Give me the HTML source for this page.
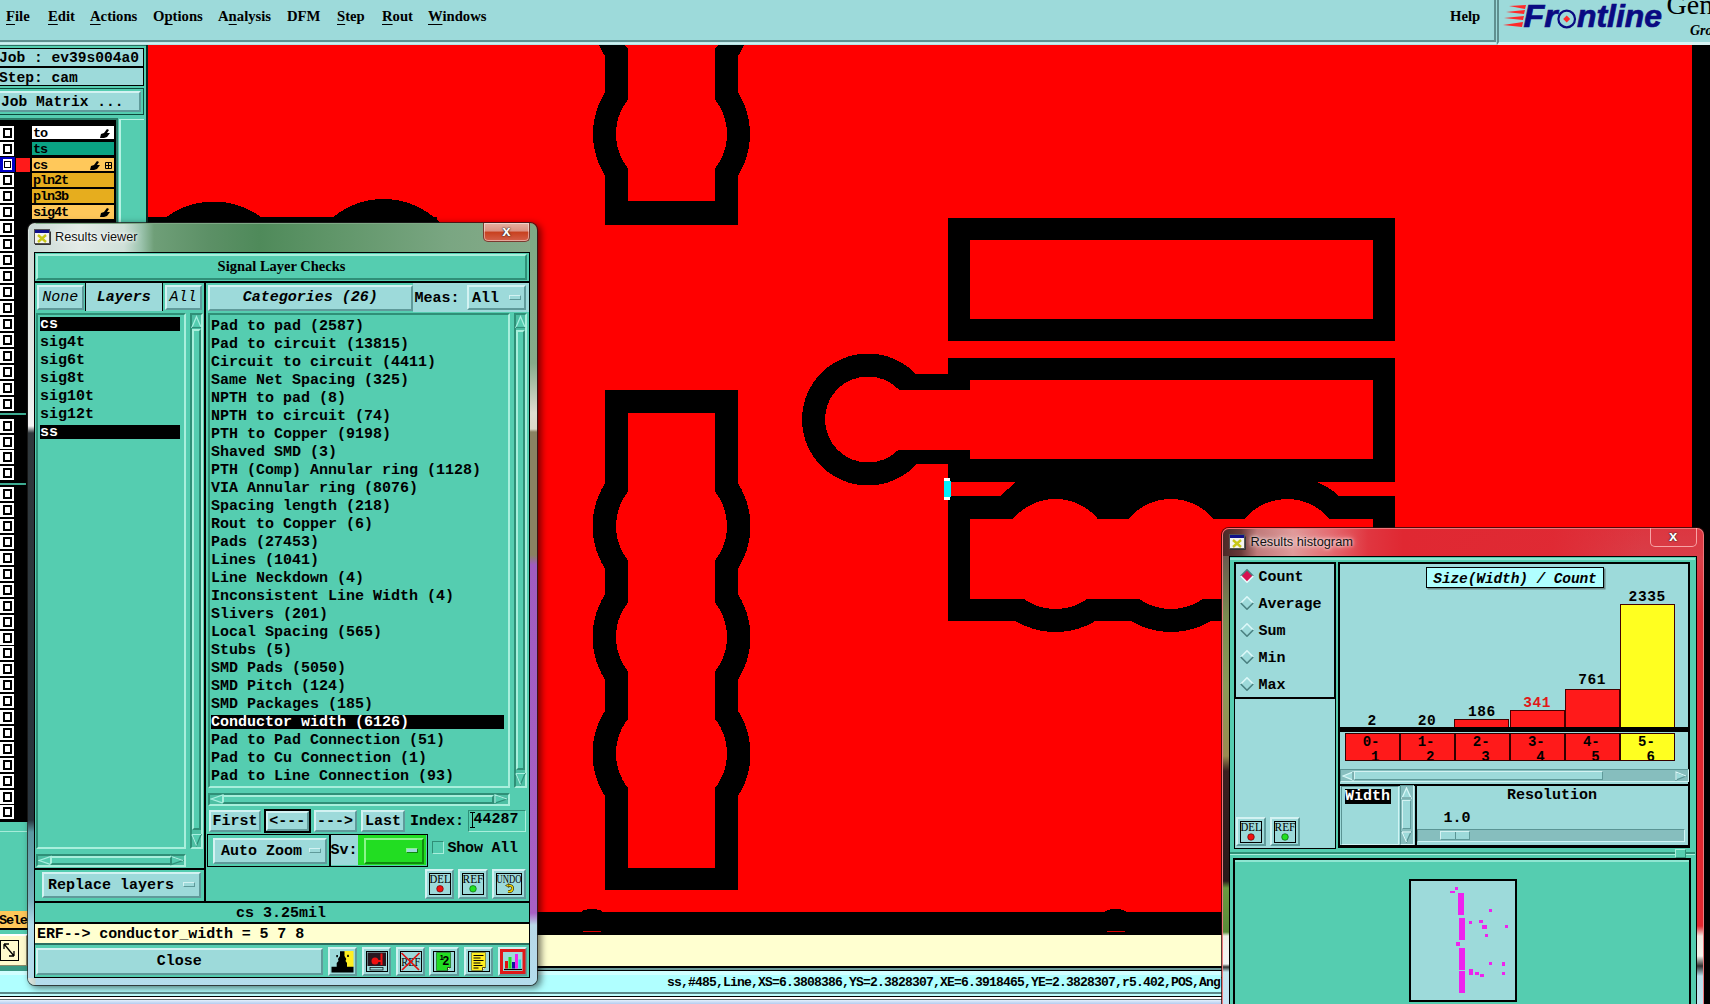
<!DOCTYPE html>
<html><head><meta charset="utf-8"><title>Genesis</title>
<style>
*{box-sizing:border-box;margin:0;padding:0}
html,body{width:1710px;height:1004px;overflow:hidden;background:#9ddada}
body{position:relative;font-family:"Liberation Mono",monospace;font-weight:bold;font-size:15px;color:#000}
.a{position:absolute}
.mono{font-family:"Liberation Mono",monospace;font-weight:bold}
.serif{font-family:"Liberation Serif",serif;font-weight:bold}
.sans{font-family:"Liberation Sans",sans-serif;font-weight:normal}
.teal{background:#55cdb0}
.cy{background:#9ddada}
.raised{border:2px solid;border-color:#d3f2f2 #5f9a9a #5f9a9a #d3f2f2}
.raisedT{border:2px solid;border-color:#a9efdc #2f8f77 #2f8f77 #a9efdc}
.sunkT{border:2px solid;border-color:#2f8f77 #a9efdc #a9efdc #2f8f77}
.t{white-space:pre;line-height:18px}
u{text-decoration:underline;text-underline-offset:3px;text-decoration-thickness:1px}
</style></head><body>
<div class="a cy" style="left:0;top:0;width:1496px;height:42px;border-right:2px solid #5f8f8f;border-bottom:2px solid #5f8f8f"></div>
<div class="a cy" style="left:1497px;top:0;width:213px;height:45px;border-left:2px solid #5f8f8f;border-bottom:3px solid #d9f4f4"></div>
<div class="a" style="left:0;top:42px;width:1496px;height:3px;background:linear-gradient(#b8e6e6,#d4f2f2 60%,#9ddada)"></div>
<div class="a serif" style="left:0;top:7px;font-size:14.7px;line-height:18px;white-space:pre">
<span class="a" style="top:0;left:6px"><u>F</u>ile</span>
<span class="a" style="top:0;left:48px"><u>E</u>dit</span>
<span class="a" style="top:0;left:90px"><u>A</u>ctions</span>
<span class="a" style="top:0;left:153px">O<u>p</u>tions</span>
<span class="a" style="top:0;left:218px">A<u>n</u>alysis</span>
<span class="a" style="top:0;left:287px">DFM</span>
<span class="a" style="top:0;left:337px"><u>S</u>tep</span>
<span class="a" style="top:0;left:382px"><u>R</u>out</span>
<span class="a" style="top:0;left:428px"><u>W</u>indows</span>
<span class="a" style="top:0;left:1450px">Help</span>
</div>
<svg class="a" style="left:1497px;top:0" width="213" height="45" viewBox="1497 0 213 45">
<g fill="#ff2a2a"><polygon points="1509,6 1526,5 1525,9"/><polygon points="1506,12 1525,10 1524,14"/><polygon points="1504,18 1524,16 1523,20"/><polygon points="1503,25 1523,22 1522,27"/></g>
<text x="1523.5" y="27" font-family="Liberation Sans, sans-serif" font-weight="bold" font-style="italic" font-size="30.5" fill="#0a0a82" stroke="#0a0a82" stroke-width="0.7" textLength="34" lengthAdjust="spacingAndGlyphs">Fr</text>
<circle cx="1566.7" cy="19" r="8.3" fill="none" stroke="#0a0a82" stroke-width="2.2"/>
<polygon points="1566.7,15.5 1570.2,19 1566.7,22.5 1563.2,19" fill="#ff2a2a"/>
<text x="1577" y="27" font-family="Liberation Sans, sans-serif" font-weight="bold" font-style="italic" font-size="30.5" fill="#0a0a82" stroke="#0a0a82" stroke-width="0.7" textLength="85" lengthAdjust="spacingAndGlyphs">ntline</text>
<text x="1666.5" y="13.5" font-family="Liberation Serif, serif" font-weight="normal" font-size="28" fill="#000">Genesis</text>
<text x="1690" y="35" font-family="Liberation Serif, serif" font-weight="bold" font-style="italic" font-size="14" fill="#000">Group</text>
</svg>

<svg class="a" style="left:0;top:0" width="1710" height="1004" viewBox="0 0 1710 1004" shape-rendering="crispEdges">
<rect x="146" y="45" width="1564" height="890" fill="#ff0000"/>
<rect x="146" y="45" width="2" height="890" fill="#000"/>
<!-- A -->
<clipPath id="ca"><rect x="500" y="45" width="400" height="300"/></clipPath><g clip-path="url(#ca)"><g fill="#000"><rect x="604.5" y="45" width="133.5" height="179.5"/><circle cx="671.5" cy="134" r="78.5"/><circle cx="671.5" cy="14.5" r="78.5"/></g>
<g fill="#ff0000"><rect x="628" y="45" width="87" height="156"/><circle cx="671.5" cy="134" r="55.5"/><circle cx="671.5" cy="14.5" r="55.5"/></g></g>
<!-- B -->
<g fill="#000"><rect x="605" y="390" width="133" height="500"/><circle cx="671.5" cy="526" r="79"/><circle cx="671.5" cy="637" r="79"/><circle cx="671.5" cy="753.5" r="79"/></g>
<g fill="#ff0000"><rect x="628" y="412.5" width="87" height="455"/><circle cx="671.5" cy="526" r="55.5"/><circle cx="671.5" cy="637" r="55.5"/><circle cx="671.5" cy="753.5" r="55.5"/></g>
<!-- C -->
<rect x="947.5" y="217.5" width="447.5" height="123.5" fill="#000"/>
<rect x="969.5" y="239.5" width="403" height="79.5" fill="#ff0000"/>
<!-- D -->
<g fill="#000"><rect x="947.5" y="358" width="447.5" height="123.8"/><circle cx="868" cy="419.5" r="66"/><rect x="868" y="374" width="101" height="89.5"/></g>
<!-- E outer -->
<g fill="#000"><rect x="947.5" y="496.4" width="447.5" height="124.6"/><circle cx="1055.5" cy="554" r="78"/><circle cx="1171" cy="554" r="78"/><circle cx="1287" cy="554" r="78"/><polygon points="1017,481 1315,481 1333,497 999,497"/></g>
<g fill="#ff0000"><rect x="969.5" y="380" width="403" height="79"/><circle cx="868" cy="419.5" r="43"/><rect x="868" y="389.5" width="102" height="60.5"/></g>
<g fill="#ff0000"><rect x="969.5" y="519" width="403" height="79.5"/><circle cx="1055.5" cy="554" r="55"/><circle cx="1171" cy="554" r="55"/><circle cx="1287" cy="554" r="55"/></g>
<!-- left band + bumps -->
<clipPath id="cb"><rect x="147" y="45" width="400" height="182"/></clipPath><g fill="#000" clip-path="url(#cb)"><rect x="147" y="217" width="290" height="10"/><circle cx="213.6" cy="281" r="79.5"/><circle cx="383.5" cy="278" r="79"/></g>
<!-- bottom band -->
<rect x="147" y="912" width="1563" height="23" fill="#000"/>
<ellipse cx="592" cy="914" rx="12" ry="5" fill="#000"/><ellipse cx="1115.5" cy="914" rx="12" ry="5" fill="#000"/>
<rect x="583" y="931" width="18" height="1" fill="#d00"/><rect x="1107" y="931" width="18" height="1" fill="#d00"/>
<!-- right strip -->
<rect x="1692" y="45" width="18" height="890" fill="#000"/>
<!-- cyan marker -->
<rect x="943.5" y="477.5" width="7" height="23" rx="3.5" fill="#fff"/><rect x="943.5" y="481" width="7" height="16" fill="#00f0ff"/>
</svg>

<div class="a teal" style="left:0;top:45px;width:147px;height:930px;border-top:1px solid #2a6f60"></div>
<div class="a" style="left:146px;top:45px;width:1.5px;height:890px;background:#0a2a22"></div>
<div class="a cy mono" style="left:-2px;top:48px;width:146px;height:20px;border:2px solid #000;border-top-width:1px;border-right-width:1px;font-size:14.6px;line-height:19px;white-space:pre;text-indent:-1px">Job : ev39s004a0</div>
<div class="a cy mono" style="left:-2px;top:66px;width:146px;height:20px;border:2px solid #000;border-bottom-width:1px;border-right-width:1px;font-size:14.6px;line-height:20px;white-space:pre;text-indent:-1px">Step: cam</div>
<div class="a teal" style="left:-2px;top:88px;width:146px;height:27px;border:1px solid #0d4a3c"></div>
<div class="a cy raised mono" style="left:-2px;top:91px;width:143px;height:21px;font-size:14.6px;line-height:18px;white-space:pre;padding-left:1px">Job Matrix ...</div>
<div class="a" style="left:0;top:118px;width:118px;height:704px;background:#000;border-top:2px solid #2a7a66;border-right:2px solid #2a7a66"></div>
<div class="a" style="left:119px;top:119px;width:25px;height:110px;background:#55cdb0;border-left:2px solid #b5f3e3;border-top:1px solid #b5f3e3"></div>
<div class="a" style="left:0;top:125.6px;width:14px;height:14px;background:#fff"><div class="a" style="left:2.5px;top:2px;width:9px;height:10px;border:2px solid #000"></div></div>
<div class="a mono" style="left:32px;top:125.6px;width:82px;height:13.5px;background:#ffffff;font-size:13.5px;line-height:15px;white-space:pre;padding-left:1px;letter-spacing:-1.1px;overflow:hidden">to<svg class="a" style="left:68px;top:3px" width="10" height="9" viewBox="0 0 10 9"><path d="M0 9 L1 5 L4 4 L7 0 L9 1 L7 4 L10 4 L7 8 L4 9 Z" fill="#000"/></svg></div>
<div class="a" style="left:0;top:141.5px;width:14px;height:14px;background:#fff"><div class="a" style="left:2.5px;top:2px;width:9px;height:10px;border:2px solid #000"></div></div>
<div class="a mono" style="left:32px;top:141.5px;width:82px;height:13.5px;background:#0aa384;font-size:13.5px;line-height:15px;white-space:pre;padding-left:1px;letter-spacing:-1.1px;overflow:hidden">ts</div>
<div class="a" style="left:0;top:156.5px;width:14.5px;height:15.5px;background:#0000c8"></div>
<div class="a" style="left:16px;top:157.5px;width:14px;height:14px;background:#ff1a1a"></div>
<div class="a" style="left:2.5px;top:159.0px;width:9.5px;height:10.5px;background:#fff"><div class="a" style="left:1.5px;top:1.5px;width:6.5px;height:7.5px;border:1.5px solid #000"></div></div>
<div class="a mono" style="left:32px;top:157.5px;width:82px;height:13.5px;background:#ffc85a;font-size:13.5px;line-height:15px;white-space:pre;padding-left:1px;letter-spacing:-1.1px;overflow:hidden">cs<svg class="a" style="left:58px;top:3px" width="10" height="9" viewBox="0 0 10 9"><path d="M0 9 L1 5 L4 4 L7 0 L9 1 L7 4 L10 4 L7 8 L4 9 Z" fill="#000"/></svg><svg class="a" style="left:73px;top:4px" width="7" height="7" viewBox="0 0 7 7"><path d="M0.5 0.5h6v6h-6zM3.5 0.5v6M0.5 3.5h6" fill="none" stroke="#000" stroke-width="1"/></svg></div>
<div class="a" style="left:0;top:173.4px;width:14px;height:14px;background:#fff"><div class="a" style="left:2.5px;top:2px;width:9px;height:10px;border:2px solid #000"></div></div>
<div class="a mono" style="left:32px;top:173.4px;width:82px;height:13.5px;background:#e6ad1e;font-size:13.5px;line-height:15px;white-space:pre;padding-left:1px;letter-spacing:-1.1px;overflow:hidden">pln2t</div>
<div class="a" style="left:0;top:189.4px;width:14px;height:14px;background:#fff"><div class="a" style="left:2.5px;top:2px;width:9px;height:10px;border:2px solid #000"></div></div>
<div class="a mono" style="left:32px;top:189.4px;width:82px;height:13.5px;background:#e6ad1e;font-size:13.5px;line-height:15px;white-space:pre;padding-left:1px;letter-spacing:-1.1px;overflow:hidden">pln3b</div>
<div class="a" style="left:0;top:205.3px;width:14px;height:14px;background:#fff"><div class="a" style="left:2.5px;top:2px;width:9px;height:10px;border:2px solid #000"></div></div>
<div class="a mono" style="left:32px;top:205.3px;width:82px;height:13.5px;background:#ffc85a;font-size:13.5px;line-height:15px;white-space:pre;padding-left:1px;letter-spacing:-1.1px;overflow:hidden">sig4t<svg class="a" style="left:68px;top:3px" width="10" height="9" viewBox="0 0 10 9"><path d="M0 9 L1 5 L4 4 L7 0 L9 1 L7 4 L10 4 L7 8 L4 9 Z" fill="#000"/></svg></div>
<div class="a" style="left:0;top:221.3px;width:14px;height:14px;background:#fff"><div class="a" style="left:2.5px;top:2px;width:9px;height:10px;border:2px solid #000"></div></div>
<div class="a" style="left:0;top:237.2px;width:14px;height:14px;background:#fff"><div class="a" style="left:2.5px;top:2px;width:9px;height:10px;border:2px solid #000"></div></div>
<div class="a" style="left:0;top:253.2px;width:14px;height:14px;background:#fff"><div class="a" style="left:2.5px;top:2px;width:9px;height:10px;border:2px solid #000"></div></div>
<div class="a" style="left:0;top:269.1px;width:14px;height:14px;background:#fff"><div class="a" style="left:2.5px;top:2px;width:9px;height:10px;border:2px solid #000"></div></div>
<div class="a" style="left:0;top:285.1px;width:14px;height:14px;background:#fff"><div class="a" style="left:2.5px;top:2px;width:9px;height:10px;border:2px solid #000"></div></div>
<div class="a" style="left:0;top:301.0px;width:14px;height:14px;background:#fff"><div class="a" style="left:2.5px;top:2px;width:9px;height:10px;border:2px solid #000"></div></div>
<div class="a" style="left:0;top:317.0px;width:14px;height:14px;background:#fff"><div class="a" style="left:2.5px;top:2px;width:9px;height:10px;border:2px solid #000"></div></div>
<div class="a" style="left:0;top:332.9px;width:14px;height:14px;background:#fff"><div class="a" style="left:2.5px;top:2px;width:9px;height:10px;border:2px solid #000"></div></div>
<div class="a" style="left:0;top:348.9px;width:14px;height:14px;background:#fff"><div class="a" style="left:2.5px;top:2px;width:9px;height:10px;border:2px solid #000"></div></div>
<div class="a" style="left:0;top:364.9px;width:14px;height:14px;background:#fff"><div class="a" style="left:2.5px;top:2px;width:9px;height:10px;border:2px solid #000"></div></div>
<div class="a" style="left:0;top:380.8px;width:14px;height:14px;background:#fff"><div class="a" style="left:2.5px;top:2px;width:9px;height:10px;border:2px solid #000"></div></div>
<div class="a" style="left:0;top:396.8px;width:14px;height:14px;background:#fff"><div class="a" style="left:2.5px;top:2px;width:9px;height:10px;border:2px solid #000"></div></div>
<div class="a" style="left:0;top:418.7px;width:14px;height:14px;background:#fff"><div class="a" style="left:2.5px;top:2px;width:9px;height:10px;border:2px solid #000"></div></div>
<div class="a" style="left:0;top:434.5px;width:14px;height:14px;background:#fff"><div class="a" style="left:2.5px;top:2px;width:9px;height:10px;border:2px solid #000"></div></div>
<div class="a" style="left:0;top:450.3px;width:14px;height:14px;background:#fff"><div class="a" style="left:2.5px;top:2px;width:9px;height:10px;border:2px solid #000"></div></div>
<div class="a" style="left:0;top:466.1px;width:14px;height:14px;background:#fff"><div class="a" style="left:2.5px;top:2px;width:9px;height:10px;border:2px solid #000"></div></div>
<div class="a" style="left:0;top:487.4px;width:14px;height:14px;background:#fff"><div class="a" style="left:2.5px;top:2px;width:9px;height:10px;border:2px solid #000"></div></div>
<div class="a" style="left:0;top:503.3px;width:14px;height:14px;background:#fff"><div class="a" style="left:2.5px;top:2px;width:9px;height:10px;border:2px solid #000"></div></div>
<div class="a" style="left:0;top:519.2px;width:14px;height:14px;background:#fff"><div class="a" style="left:2.5px;top:2px;width:9px;height:10px;border:2px solid #000"></div></div>
<div class="a" style="left:0;top:535.1px;width:14px;height:14px;background:#fff"><div class="a" style="left:2.5px;top:2px;width:9px;height:10px;border:2px solid #000"></div></div>
<div class="a" style="left:0;top:551.0px;width:14px;height:14px;background:#fff"><div class="a" style="left:2.5px;top:2px;width:9px;height:10px;border:2px solid #000"></div></div>
<div class="a" style="left:0;top:566.9px;width:14px;height:14px;background:#fff"><div class="a" style="left:2.5px;top:2px;width:9px;height:10px;border:2px solid #000"></div></div>
<div class="a" style="left:0;top:582.8px;width:14px;height:14px;background:#fff"><div class="a" style="left:2.5px;top:2px;width:9px;height:10px;border:2px solid #000"></div></div>
<div class="a" style="left:0;top:598.7px;width:14px;height:14px;background:#fff"><div class="a" style="left:2.5px;top:2px;width:9px;height:10px;border:2px solid #000"></div></div>
<div class="a" style="left:0;top:614.6px;width:14px;height:14px;background:#fff"><div class="a" style="left:2.5px;top:2px;width:9px;height:10px;border:2px solid #000"></div></div>
<div class="a" style="left:0;top:630.5px;width:14px;height:14px;background:#fff"><div class="a" style="left:2.5px;top:2px;width:9px;height:10px;border:2px solid #000"></div></div>
<div class="a" style="left:0;top:646.4px;width:14px;height:14px;background:#fff"><div class="a" style="left:2.5px;top:2px;width:9px;height:10px;border:2px solid #000"></div></div>
<div class="a" style="left:0;top:662.3px;width:14px;height:14px;background:#fff"><div class="a" style="left:2.5px;top:2px;width:9px;height:10px;border:2px solid #000"></div></div>
<div class="a" style="left:0;top:678.2px;width:14px;height:14px;background:#fff"><div class="a" style="left:2.5px;top:2px;width:9px;height:10px;border:2px solid #000"></div></div>
<div class="a" style="left:0;top:694.1px;width:14px;height:14px;background:#fff"><div class="a" style="left:2.5px;top:2px;width:9px;height:10px;border:2px solid #000"></div></div>
<div class="a" style="left:0;top:710.0px;width:14px;height:14px;background:#fff"><div class="a" style="left:2.5px;top:2px;width:9px;height:10px;border:2px solid #000"></div></div>
<div class="a" style="left:0;top:725.9px;width:14px;height:14px;background:#fff"><div class="a" style="left:2.5px;top:2px;width:9px;height:10px;border:2px solid #000"></div></div>
<div class="a" style="left:0;top:741.8px;width:14px;height:14px;background:#fff"><div class="a" style="left:2.5px;top:2px;width:9px;height:10px;border:2px solid #000"></div></div>
<div class="a" style="left:0;top:757.7px;width:14px;height:14px;background:#fff"><div class="a" style="left:2.5px;top:2px;width:9px;height:10px;border:2px solid #000"></div></div>
<div class="a" style="left:0;top:773.6px;width:14px;height:14px;background:#fff"><div class="a" style="left:2.5px;top:2px;width:9px;height:10px;border:2px solid #000"></div></div>
<div class="a" style="left:0;top:789.5px;width:14px;height:14px;background:#fff"><div class="a" style="left:2.5px;top:2px;width:9px;height:10px;border:2px solid #000"></div></div>
<div class="a" style="left:0;top:805.4px;width:14px;height:14px;background:#fff"><div class="a" style="left:2.5px;top:2px;width:9px;height:10px;border:2px solid #000"></div></div>
<div class="a" style="left:0;top:413px;width:26px;height:2px;background:#3fae94"></div>
<div class="a" style="left:0;top:483px;width:26px;height:2px;background:#3fae94"></div>
<div class="a" style="left:0;top:831px;width:27px;height:1px;background:#a5ecd9"></div>
<div class="a mono" style="left:-2px;top:911px;width:30px;height:19px;background:#ffc85a;font-size:13.5px;line-height:20px;white-space:pre;overflow:hidden;border-bottom:2px solid #000;letter-spacing:-1.2px;padding-left:1px">Sele</div>
<div class="a" style="left:-2px;top:934px;width:30px;height:33px;background:#fffacd;border:2px solid;border-color:#fff #8a8a6a #8a8a6a #fff"></div>
<svg class="a" style="left:0;top:940px" width="20" height="22" viewBox="0 0 20 22"><rect x="0.5" y="0.5" width="18" height="20" fill="#fffacd" stroke="#000"/><path d="M4 4 L14 16 M4 4 L4 9 M4 4 L9 4 M14 16 L14 11 M14 16 L9 16" stroke="#000" stroke-width="1.3" fill="none"/></svg>

<div class="a" style="left:147px;top:935.0px;width:1563px;height:31.0px;background:#ffffd0"></div>
<div class="a" style="left:28px;top:966.0px;width:1682px;height:1.5px;background:#000"></div>
<div class="a" style="left:0px;top:967.5px;width:1710px;height:2.5px;background:#6a9a9a"></div>
<div class="a" style="left:28px;top:970.0px;width:1682px;height:1.0px;background:#000"></div>
<div class="a" style="left:0px;top:971.0px;width:1710px;height:4.0px;background:#d0ffff"></div>
<div class="a" style="left:0px;top:975.0px;width:1710px;height:17.0px;background:#b0ffff"></div>
<div class="a" style="left:0px;top:992.0px;width:1710px;height:2.0px;background:#5a8a8a"></div>
<div class="a" style="left:0px;top:994.0px;width:1710px;height:2.0px;background:#c0ffff"></div>
<div class="a" style="left:0px;top:996.0px;width:1710px;height:1.0px;background:#000"></div>
<div class="a" style="left:0px;top:997.0px;width:1710px;height:2.0px;background:#fff"></div>
<div class="a" style="left:0px;top:999.0px;width:1710px;height:1.0px;background:#6a7a7a"></div>
<div class="a" style="left:0px;top:1000.0px;width:1710px;height:4.0px;background:linear-gradient(#e4f0fc,#b4ccf0)"></div>
<div class="a" style="left:0px;top:966.0px;width:28px;height:5.0px;background:#3a9a84"></div>
<div class="a mono" style="left:667px;top:973px;width:556px;height:20px;font-size:13px;line-height:20px;white-space:pre;overflow:hidden;letter-spacing:-0.8px">ss,#485,Line,XS=6.3808386,YS=2.3828307,XE=6.3918465,YE=2.3828307,r5.402,POS,Angle</div>

<div class="a " style="left:27.5px;top:223.0px;width:509.5px;height:762.0px;border-radius:7px 7px 7px 7px;background:linear-gradient(90deg,#dfe7e2 0,#c9d6cf 7px,rgba(255,255,255,0) 8px),linear-gradient(180deg,#7ea985 0,#86ab8a 140px,#e0dcd0 190px,#dcd8c8 206px,#8a8262 209px,#8a8262 332px,#a05cc0 342px,#a860c4 690px,#b8d8e8 702px,#b4dcec 100%);box-shadow:0 0 0 1px rgba(30,30,30,.75),3px 2px 7px 1px rgba(0,0,0,.55)"></div>
<div class="a " style="left:28.0px;top:240.0px;width:6.0px;height:738.0px;background:linear-gradient(180deg,#cfd8d4 0,#e8ecea 150px,#f4f4f4 186px,#30383c 193px,#28343c 580px,#5a98a0 592px,#7ab4c0 660px,#b4dcec 685px)"></div>
<div class="a " style="left:28.5px;top:224.0px;width:501.0px;height:28.0px;border-radius:6px 0 0 0;background:linear-gradient(90deg,#c9d8d4 0,#e3ebe7 50px,#cfe0d8 95px,#9cc4ae 112px,#6f9f78 125px,#5c9066 180px,#4f8a5a 230px,#5f9568 300px,#7aa682 420px,#86ab8a 100%)"></div>
<svg class="a" style="left:34px;top:229px" width="17" height="16" viewBox="0 0 17 16"><rect x="0.5" y="0.5" width="15" height="14" fill="#f4f4f0" stroke="#555"/><rect x="1" y="1" width="14" height="3" fill="#10108a"/><path d="M4 6 L12 13 M12 6 L4 13" stroke="#c8c818" stroke-width="2.4"/><path d="M1 15.5h15.500v-13" stroke="#333" fill="none"/></svg>
<div class="a sans" style="left:55.0px;top:229.0px;width:120.0px;height:16.0px;font-size:12.7px;line-height:16px;color:#111;white-space:pre;text-shadow:0 0 6px #fff,0 0 3px #fff">Results viewer</div>
<div class="a " style="left:483.0px;top:223.0px;width:47.0px;height:19.0px;border-radius:0 0 5px 5px;border:1px solid #7a3a30;border-top:0;background:linear-gradient(180deg,#e6b0a0 0,#dc9080 45%,#c8401e 50%,#d4604a 100%);box-shadow:inset 0 0 0 1px rgba(255,255,255,.45);text-align:center;color:#fff;font-family:Liberation Sans,sans-serif;font-weight:bold;font-size:15px;line-height:16px;text-shadow:0 0 2px #333,0 0 1px #000">x</div>
<div class="a " style="left:34.0px;top:251.5px;width:495.5px;height:726.0px;background:#55cdb0;border:1.5px solid #000"></div>
<div class="a teal raisedT serif" style="left:36.0px;top:253.5px;width:491.0px;height:26.0px;font-size:14.5px;line-height:21.0px;white-space:pre;text-align:center;font-size:14.5px;">Signal Layer Checks</div>
<div class="a " style="left:35.0px;top:280.5px;width:494.0px;height:2.0px;background:#000"></div>
<div class="a " style="left:35.0px;top:282.5px;width:494.0px;height:29.0px;background:#55cdb0"></div>
<div class="a cy raised mono" style="left:37.0px;top:285.0px;width:46.5px;height:25.0px;font-size:15px;line-height:21.0px;white-space:pre;text-align:center;font-style:italic;font-weight:normal;">None</div>
<div class="a cy mono" style="left:85.0px;top:283.0px;width:77.5px;height:28.0px;font-size:15px;line-height:29px;text-align:center;font-style:italic;border-left:1.5px solid #000;border-right:1.5px solid #000">Layers</div>
<div class="a cy raised mono" style="left:164.5px;top:285.0px;width:37.0px;height:25.0px;font-size:15px;line-height:21.0px;white-space:pre;text-align:center;font-style:italic;font-weight:normal;">All</div>
<div class="a " style="left:203.5px;top:282.5px;width:2.5px;height:620.0px;background:#000"></div>
<div class="a cy raised mono" style="left:208.0px;top:284.5px;width:204.5px;height:26.0px;font-size:15px;line-height:22.0px;white-space:pre;text-align:center;font-style:italic;">Categories (26)</div>
<div class="a cy mono" style="left:412.5px;top:283.0px;width:116.0px;height:28.5px;font-size:15px;line-height:31px;white-space:pre;padding-left:2px">Meas:</div>
<div class="a cy raised mono" style="left:467.0px;top:285.0px;width:59.0px;height:25.0px;font-size:15px;line-height:23.5px;white-space:pre;text-align:center;text-align:left;padding-left:3px;">All</div>
<div class="a cy raised" style="left:509.0px;top:295.0px;width:12.0px;height:5.0px;border-width:1.5px"></div>
<div class="a teal sunkT" style="left:36.0px;top:312.5px;width:150.0px;height:536.5px;"></div>
<div class="a " style="left:40.0px;top:316.6px;width:140.0px;height:14.5px;background:#000"></div>
<div class="a mono" style="left:40.0px;top:316.4px;width:140.0px;height:18.0px;line-height:18px;font-size:15px;white-space:pre;color:#fff">cs</div>
<div class="a mono" style="left:40.0px;top:334.4px;width:140.0px;height:18.0px;line-height:18px;font-size:15px;white-space:pre;color:#000">sig4t</div>
<div class="a mono" style="left:40.0px;top:352.4px;width:140.0px;height:18.0px;line-height:18px;font-size:15px;white-space:pre;color:#000">sig6t</div>
<div class="a mono" style="left:40.0px;top:370.4px;width:140.0px;height:18.0px;line-height:18px;font-size:15px;white-space:pre;color:#000">sig8t</div>
<div class="a mono" style="left:40.0px;top:388.4px;width:140.0px;height:18.0px;line-height:18px;font-size:15px;white-space:pre;color:#000">sig10t</div>
<div class="a mono" style="left:40.0px;top:406.4px;width:140.0px;height:18.0px;line-height:18px;font-size:15px;white-space:pre;color:#000">sig12t</div>
<div class="a " style="left:40.0px;top:424.6px;width:140.0px;height:14.5px;background:#000"></div>
<div class="a mono" style="left:40.0px;top:424.4px;width:140.0px;height:18.0px;line-height:18px;font-size:15px;white-space:pre;color:#fff">ss</div>
<div class="a sunkT" style="left:189.5px;top:312.5px;width:13.0px;height:536.0px;background:#4dbfa3"></div>
<svg class="a" style="left:190.5px;top:314.5px" width="11" height="14" viewBox="0 0 12 14"><path d="M6 1 L11 13 L1 13 Z" fill="#55cdb0" stroke="#a8f0e0" stroke-width="1.3"/><path d="M11 13 L1 13" stroke="#2e8e78" stroke-width="1.3"/></svg>
<svg class="a" style="left:190.5px;top:832.5px" width="11" height="14" viewBox="0 0 12 14"><path d="M6 13 L11 1 L1 1 Z" fill="#55cdb0" stroke="#2e8e78" stroke-width="1.3"/><path d="M1 1 L11 1 M1 1 L6 13" stroke="#a8f0e0" stroke-width="1.3"/></svg>
<div class="a teal raisedT" style="left:191.5px;top:329.0px;width:9.0px;height:501.0px;"></div>
<div class="a sunkT" style="left:36.0px;top:853.5px;width:150.0px;height:13.0px;background:#4dbfa3"></div>
<svg class="a" style="left:38.0px;top:854.5px" width="14" height="11" viewBox="0 0 14 10"><path d="M1 5 L13 1 L13 9 Z" fill="#55cdb0" stroke="#a8f0e0" stroke-width="1.3"/><path d="M13 1 L13 9" stroke="#2e8e78" stroke-width="1.3"/></svg>
<svg class="a" style="left:170.0px;top:854.5px" width="14" height="11" viewBox="0 0 14 10"><path d="M13 5 L1 1 L1 9 Z" fill="#55cdb0" stroke="#2e8e78" stroke-width="1.3"/><path d="M1 9 L1 1 L13 5" stroke="#a8f0e0" stroke-width="1.3" fill="none"/></svg>
<div class="a teal raisedT" style="left:50.0px;top:855.5px;width:122.0px;height:9.0px;"></div>
<div class="a " style="left:35.0px;top:867.5px;width:169.0px;height:2.0px;background:#000"></div>
<div class="a cy raised mono" style="left:42.0px;top:872.0px;width:159.0px;height:25.5px;font-size:15px;line-height:23.5px;white-space:pre;text-align:center;text-align:left;padding-left:4px;">Replace layers</div>
<div class="a cy raised" style="left:183.0px;top:881.5px;width:12.0px;height:5.0px;border-width:1.5px"></div>
<div class="a " style="left:35.0px;top:900.5px;width:494.0px;height:2.5px;background:#000"></div>
<div class="a teal sunkT" style="left:207.5px;top:313.0px;width:302.0px;height:474.5px;"></div>
<div class="a mono" style="left:211.0px;top:317.8px;width:296.0px;height:18.0px;line-height:18px;font-size:15px;white-space:pre;color:#000">Pad to pad (2587)</div>
<div class="a mono" style="left:211.0px;top:335.8px;width:296.0px;height:18.0px;line-height:18px;font-size:15px;white-space:pre;color:#000">Pad to circuit (13815)</div>
<div class="a mono" style="left:211.0px;top:353.8px;width:296.0px;height:18.0px;line-height:18px;font-size:15px;white-space:pre;color:#000">Circuit to circuit (4411)</div>
<div class="a mono" style="left:211.0px;top:371.8px;width:296.0px;height:18.0px;line-height:18px;font-size:15px;white-space:pre;color:#000">Same Net Spacing (325)</div>
<div class="a mono" style="left:211.0px;top:389.8px;width:296.0px;height:18.0px;line-height:18px;font-size:15px;white-space:pre;color:#000">NPTH to pad (8)</div>
<div class="a mono" style="left:211.0px;top:407.8px;width:296.0px;height:18.0px;line-height:18px;font-size:15px;white-space:pre;color:#000">NPTH to circuit (74)</div>
<div class="a mono" style="left:211.0px;top:425.8px;width:296.0px;height:18.0px;line-height:18px;font-size:15px;white-space:pre;color:#000">PTH to Copper (9198)</div>
<div class="a mono" style="left:211.0px;top:443.8px;width:296.0px;height:18.0px;line-height:18px;font-size:15px;white-space:pre;color:#000">Shaved SMD (3)</div>
<div class="a mono" style="left:211.0px;top:461.8px;width:296.0px;height:18.0px;line-height:18px;font-size:15px;white-space:pre;color:#000">PTH (Comp) Annular ring (1128)</div>
<div class="a mono" style="left:211.0px;top:479.8px;width:296.0px;height:18.0px;line-height:18px;font-size:15px;white-space:pre;color:#000">VIA Annular ring (8076)</div>
<div class="a mono" style="left:211.0px;top:497.8px;width:296.0px;height:18.0px;line-height:18px;font-size:15px;white-space:pre;color:#000">Spacing length (218)</div>
<div class="a mono" style="left:211.0px;top:515.8px;width:296.0px;height:18.0px;line-height:18px;font-size:15px;white-space:pre;color:#000">Rout to Copper (6)</div>
<div class="a mono" style="left:211.0px;top:533.8px;width:296.0px;height:18.0px;line-height:18px;font-size:15px;white-space:pre;color:#000">Pads (27453)</div>
<div class="a mono" style="left:211.0px;top:551.8px;width:296.0px;height:18.0px;line-height:18px;font-size:15px;white-space:pre;color:#000">Lines (1041)</div>
<div class="a mono" style="left:211.0px;top:569.8px;width:296.0px;height:18.0px;line-height:18px;font-size:15px;white-space:pre;color:#000">Line Neckdown (4)</div>
<div class="a mono" style="left:211.0px;top:587.8px;width:296.0px;height:18.0px;line-height:18px;font-size:15px;white-space:pre;color:#000">Inconsistent Line Width (4)</div>
<div class="a mono" style="left:211.0px;top:605.8px;width:296.0px;height:18.0px;line-height:18px;font-size:15px;white-space:pre;color:#000">Slivers (201)</div>
<div class="a mono" style="left:211.0px;top:623.8px;width:296.0px;height:18.0px;line-height:18px;font-size:15px;white-space:pre;color:#000">Local Spacing (565)</div>
<div class="a mono" style="left:211.0px;top:641.8px;width:296.0px;height:18.0px;line-height:18px;font-size:15px;white-space:pre;color:#000">Stubs (5)</div>
<div class="a mono" style="left:211.0px;top:659.8px;width:296.0px;height:18.0px;line-height:18px;font-size:15px;white-space:pre;color:#000">SMD Pads (5050)</div>
<div class="a mono" style="left:211.0px;top:677.8px;width:296.0px;height:18.0px;line-height:18px;font-size:15px;white-space:pre;color:#000">SMD Pitch (124)</div>
<div class="a mono" style="left:211.0px;top:695.8px;width:296.0px;height:18.0px;line-height:18px;font-size:15px;white-space:pre;color:#000">SMD Packages (185)</div>
<div class="a " style="left:211.0px;top:714.5px;width:293.0px;height:14.5px;background:#000"></div>
<div class="a mono" style="left:211.0px;top:713.8px;width:296.0px;height:18.0px;line-height:18px;font-size:15px;white-space:pre;color:#fff">Conductor width (6126)</div>
<div class="a mono" style="left:211.0px;top:731.8px;width:296.0px;height:18.0px;line-height:18px;font-size:15px;white-space:pre;color:#000">Pad to Pad Connection (51)</div>
<div class="a mono" style="left:211.0px;top:749.8px;width:296.0px;height:18.0px;line-height:18px;font-size:15px;white-space:pre;color:#000">Pad to Cu Connection (1)</div>
<div class="a mono" style="left:211.0px;top:767.8px;width:296.0px;height:18.0px;line-height:18px;font-size:15px;white-space:pre;color:#000">Pad to Line Connection (93)</div>
<div class="a sunkT" style="left:513.5px;top:313.0px;width:13.5px;height:474.5px;background:#4dbfa3"></div>
<svg class="a" style="left:514.5px;top:315.0px" width="11" height="14" viewBox="0 0 12 14"><path d="M6 1 L11 13 L1 13 Z" fill="#55cdb0" stroke="#a8f0e0" stroke-width="1.3"/><path d="M11 13 L1 13" stroke="#2e8e78" stroke-width="1.3"/></svg>
<svg class="a" style="left:514.5px;top:771.5px" width="11" height="14" viewBox="0 0 12 14"><path d="M6 13 L11 1 L1 1 Z" fill="#55cdb0" stroke="#2e8e78" stroke-width="1.3"/><path d="M1 1 L11 1 M1 1 L6 13" stroke="#a8f0e0" stroke-width="1.3"/></svg>
<div class="a teal raisedT" style="left:515.5px;top:330.0px;width:9.5px;height:440.0px;"></div>
<div class="a sunkT" style="left:207.5px;top:793.0px;width:302.0px;height:12.5px;background:#4dbfa3"></div>
<svg class="a" style="left:209.5px;top:794.0px" width="14" height="10" viewBox="0 0 14 10"><path d="M1 5 L13 1 L13 9 Z" fill="#55cdb0" stroke="#a8f0e0" stroke-width="1.3"/><path d="M13 1 L13 9" stroke="#2e8e78" stroke-width="1.3"/></svg>
<svg class="a" style="left:493.5px;top:794.0px" width="14" height="10" viewBox="0 0 14 10"><path d="M13 5 L1 1 L1 9 Z" fill="#55cdb0" stroke="#2e8e78" stroke-width="1.3"/><path d="M1 9 L1 1 L13 5" stroke="#a8f0e0" stroke-width="1.3" fill="none"/></svg>
<div class="a teal raisedT" style="left:222.0px;top:795.0px;width:272.0px;height:8.5px;"></div>
<div class="a cy raised mono" style="left:209.0px;top:809.5px;width:52.0px;height:22.0px;font-size:15px;line-height:20.0px;white-space:pre;text-align:center;">First</div>
<div class="a " style="left:263.5px;top:808.5px;width:47.5px;height:24.0px;background:#000"></div>
<div class="a cy raised mono" style="left:265.5px;top:810.5px;width:43.5px;height:20.0px;font-size:15px;line-height:18.0px;white-space:pre;text-align:center;">&lt;---</div>
<div class="a cy raised mono" style="left:313.5px;top:809.5px;width:43.0px;height:22.0px;font-size:15px;line-height:20.0px;white-space:pre;text-align:center;">---&gt;</div>
<div class="a cy raised mono" style="left:361.0px;top:809.5px;width:44.0px;height:22.0px;font-size:15px;line-height:20.0px;white-space:pre;text-align:center;">Last</div>
<div class="a mono" style="left:410.0px;top:810.0px;width:56.0px;height:21.0px;font-size:15px;line-height:23px;white-space:pre">Index:</div>
<div class="a teal sunkT mono" style="left:467.5px;top:809.5px;width:58.0px;height:22.0px;font-size:15px;line-height:18px;white-space:pre;padding-left:5px;border-color:#2f8f77 #a9efdc #a9efdc #2f8f77;border-width:1.5px">44287</div>
<div class="a " style="left:472.0px;top:812.0px;width:1.2px;height:16.0px;background:#000"></div>
<div class="a " style="left:470.0px;top:812.0px;width:5.0px;height:1.0px;background:#000"></div>
<div class="a " style="left:470.0px;top:827.0px;width:5.0px;height:1.0px;background:#000"></div>
<div class="a " style="left:206.5px;top:833.5px;width:221.0px;height:33.0px;border:1.5px solid #000;background:#55cdb0"></div>
<div class="a " style="left:329.0px;top:833.5px;width:1.5px;height:33.0px;background:#000"></div>
<div class="a cy raised mono" style="left:213.0px;top:837.5px;width:114.0px;height:26.5px;font-size:15px;line-height:24.5px;white-space:pre;text-align:center;text-align:left;padding-left:6px;">Auto Zoom</div>
<div class="a cy raised" style="left:309.0px;top:848.0px;width:12.0px;height:5.0px;border-width:1.5px"></div>
<div class="a cy mono" style="left:330.5px;top:835.0px;width:27.5px;height:30.0px;font-size:15px;line-height:32.5px;white-space:pre">Sv:</div>
<div class="a " style="left:358.0px;top:835.0px;width:68.0px;height:30.0px;background:#22dd22"></div>
<div class="a " style="left:364.0px;top:837.5px;width:60.0px;height:26.5px;background:#22dd22;border:2px solid;border-color:#8cf58c #0f8a0f #0f8a0f #8cf58c"></div>
<div class="a " style="left:406.0px;top:848.0px;width:12.0px;height:5.0px;border:1.5px solid;border-color:#8cf58c #0f8a0f #0f8a0f #8cf58c;background:#9ddada"></div>
<div class="a " style="left:432.0px;top:841.0px;width:12.0px;height:12.5px;border:1.5px solid;border-color:#2f8f77 #a9efdc #a9efdc #2f8f77;background:#55cdb0"></div>
<div class="a mono" style="left:447.5px;top:840.0px;width:80.0px;height:18.0px;font-size:15px;line-height:18px;white-space:pre;letter-spacing:-0.2px">Show All</div>
<div class="a cy raised" style="left:424.5px;top:869.0px;width:29.5px;height:30.0px;"><svg width="26" height="26" viewBox="0 0 26 26" style="position:absolute;left:0;top:0"><rect x="2.5" y="2.5" width="21" height="21" fill="#9ddada" stroke="#000" stroke-width="1"/><text x="13.0" y="12" text-anchor="middle" font-family="Liberation Serif, serif" font-weight="normal" font-size="12.5" textLength="21" lengthAdjust="spacingAndGlyphs" fill="#000">DEL</text><circle cx="13" cy="17.8" r="3.3" fill="#f01010" stroke="#500" stroke-width=".6"/></svg></div>
<div class="a cy raised" style="left:458.0px;top:869.0px;width:29.5px;height:30.0px;"><svg width="26" height="26" viewBox="0 0 26 26" style="position:absolute;left:0;top:0"><rect x="2.5" y="2.5" width="21" height="21" fill="#9ddada" stroke="#000" stroke-width="1"/><text x="13.0" y="12" text-anchor="middle" font-family="Liberation Serif, serif" font-weight="normal" font-size="12.5" textLength="21" lengthAdjust="spacingAndGlyphs" fill="#000">REF</text><circle cx="13" cy="17.8" r="3.3" fill="#22e022" stroke="#050" stroke-width=".6"/></svg></div>
<div class="a cy raised" style="left:492.0px;top:869.0px;width:34.0px;height:30.0px;"><svg width="30" height="26" viewBox="0 0 30 26" style="position:absolute;left:0;top:0"><rect x="2.5" y="2.5" width="25" height="21" fill="#9ddada" stroke="#000" stroke-width="1"/><text x="15.0" y="12" text-anchor="middle" font-family="Liberation Serif, serif" font-weight="normal" font-size="12.5" textLength="25" lengthAdjust="spacingAndGlyphs" fill="#000">UNDO</text><path d="M11.5 14.5 L15 12.5 L15 16.5 Z" fill="#f0d000" stroke="#000" stroke-width=".5"/><path d="M14.5 14.5 Q19 14 18.5 18 Q18 21 14 20.5" fill="none" stroke="#000" stroke-width="2.6"/><path d="M14.5 14.5 Q19 14 18.5 18 Q18 21 14 20.5" fill="none" stroke="#f0d000" stroke-width="1.6"/></svg></div>
<div class="a teal mono" style="left:35.0px;top:903.0px;width:494.0px;height:18.5px;font-size:15px;line-height:21px;white-space:pre;padding-left:201px">cs 3.25mil</div>
<div class="a " style="left:35.0px;top:921.5px;width:494.0px;height:2.0px;background:#000"></div>
<div class="a mono" style="left:35.0px;top:923.5px;width:494.0px;height:19.5px;background:#ffffd0;font-size:15px;line-height:21px;white-space:pre;padding-left:2px;letter-spacing:-0.1px">ERF--&gt; conductor_width = 5 7 8</div>
<div class="a " style="left:35.0px;top:943.0px;width:494.0px;height:1.5px;background:#2a6f60"></div>
<div class="a cy raised mono" style="left:36.0px;top:947.5px;width:286.5px;height:27.5px;font-size:15px;line-height:24.0px;white-space:pre;text-align:center;">Close</div>
<div class="a cy raised" style="left:327.5px;top:946.5px;width:29.5px;height:29.0px;"><svg width="26" height="25" viewBox="0 0 26 25" style="position:absolute;left:0;top:0"><rect x="1.5" y="2" width="22" height="21.5" fill="#9ddada"/><rect x="14" y="2" width="9.500" height="16" fill="#ffee22"/><polygon points="10,2.2 14.5,2.2 14.5,7 16.3,10 15.5,12 17,14 17,17.700 23.5,17.700 23.5,23.5 1.5,23.5 1.5,17.700 6.700,17.700 6.700,14 8.500,12 8,10 10,7" fill="#000"/><rect x="6.300" y="6" width="1.600" height="2.200" fill="#000"/><rect x="17.200" y="5.800" width="1.600" height="2.200" fill="#000"/></svg></div>
<div class="a cy raised" style="left:361.5px;top:946.5px;width:29.5px;height:29.0px;"><svg width="26" height="25" viewBox="0 0 26 25" style="position:absolute;left:0;top:0"><rect x="2.5" y="2.5" width="21" height="20" fill="#9ddada" stroke="#000" stroke-width="1"/><rect x="3.500" y="3.500" width="18.500" height="13.500" fill="#281820"/><circle cx="11" cy="12" r="3.500" fill="#f01010"/><path d="M13 12h5M17.500 4.500v11.500" stroke="#f01010" stroke-width="2"/><rect x="6" y="18.500" width="13" height="2.500" fill="#9ddada" stroke="#000" stroke-width=".7"/></svg></div>
<div class="a cy raised" style="left:395.5px;top:946.5px;width:29.5px;height:29.0px;"><svg width="26" height="25" viewBox="0 0 26 25" style="position:absolute;left:0;top:0"><rect x="2.5" y="2.5" width="21" height="20" fill="#9ddada" stroke="#000" stroke-width="1"/><text x="12.800" y="17" text-anchor="middle" font-family="Liberation Serif, serif" font-weight="normal" font-size="12" textLength="19" lengthAdjust="spacingAndGlyphs">REF</text><path d="M3.500 4 L21 21 M21.500 4 L4 21" stroke="#e01010" stroke-width="1.700"/></svg></div>
<div class="a cy raised" style="left:429.0px;top:946.5px;width:29.5px;height:29.0px;"><svg width="26" height="25" viewBox="0 0 26 25" style="position:absolute;left:0;top:0"><rect x="2.5" y="2.5" width="21" height="20" fill="#9ddada" stroke="#000" stroke-width="1"/><path d="M5.500 3.500h14v15l-3 3h-11z" fill="#22dd22" stroke="#0a5a0a" stroke-width=".6"/><text x="8.500" y="11" font-family="Liberation Sans, sans-serif" font-weight="bold" font-size="8">1</text><text x="11.500" y="15.500" font-family="Liberation Sans, sans-serif" font-weight="bold" font-size="12">2</text><path d="M16.500 21.500v-3h3" fill="#fffacd" stroke="#000" stroke-width=".7"/></svg></div>
<div class="a cy raised" style="left:463.5px;top:946.5px;width:29.5px;height:29.0px;"><svg width="26" height="25" viewBox="0 0 26 25" style="position:absolute;left:0;top:0"><rect x="2.5" y="2.5" width="21" height="20" fill="#9ddada" stroke="#000" stroke-width="1"/><path d="M5.500 3.500h14v15l-3 3h-11z" fill="#ffee22" stroke="#5a5a0a" stroke-width=".6"/><path d="M7.500 6.500h10M7.500 9h7M7.500 11.500h10M7.500 14h7M7.500 16.500h9M7.500 19h5" stroke="#000" stroke-width="1.100"/><path d="M16.500 21.500v-3h3" fill="#fffacd" stroke="#000" stroke-width=".7"/></svg></div>
<div class="a cy raised" style="left:497.5px;top:946.5px;width:29.5px;height:29.0px;"><svg width="26" height="25" viewBox="0 0 26 25" style="position:absolute;left:0;top:0"><rect x="0" y="0" width="25.500" height="25" fill="#e01818"/><rect x="3" y="3" width="19.500" height="19" fill="#9ddada"/><path d="M4 20.500h18" stroke="#000" stroke-width="1.200"/><rect x="5" y="12" width="3" height="7.500" fill="#e01010"/><rect x="8.500" y="8" width="3" height="11.500" fill="#22dd22"/><rect x="12" y="13" width="3" height="6.500" fill="#1010a0"/><rect x="15" y="5" width="3" height="14.500" fill="#ee22ee"/><rect x="18.500" y="10.500" width="2.500" height="9" fill="#22dddd"/></svg></div>

<div class="a " style="left:1222.0px;top:528.0px;width:481.5px;height:490.0px;border-radius:7px 7px 0 0;background:linear-gradient(180deg,#dc3640 0,#d8414b 40px,#d8414b 100%);box-shadow:0 0 0 1px rgba(40,10,10,.8),inset 0 0 0 1px rgba(255,170,170,.55)"></div>
<div class="a " style="left:1703.5px;top:527.0px;width:7.0px;height:477.0px;background:#000"></div>
<div class="a " style="left:1696.5px;top:556.0px;width:6.5px;height:448.0px;background:linear-gradient(180deg,#d8414b 0,#e02830 60px,#e02830 370px,#f0e8e0 380px,#f4f4ec 400px,#303030 410px,#b8e0ec 420px,#c4e4f0 448px)"></div>
<div class="a " style="left:1223.0px;top:529.0px;width:420.0px;height:27.0px;border-radius:6px 0 0 0;background:linear-gradient(90deg,#4a2a28 0,#6a3a38 18px,#c07a7a 34px,#e09a9a 70px,#e4686e 110px,#e03640 145px,rgba(224,40,50,1) 180px,rgba(224,40,50,.9) 330px,rgba(222,48,58,0) 420px)"></div>
<div class="a " style="left:1222.5px;top:556.0px;width:6.5px;height:448.0px;background:linear-gradient(180deg,#6a5a50 0,#7a8a50 60px,#8a9a58 130px,#9a8a50 200px,#3a2020 215px,#2a1a1a 325px,#6a9a40 332px,#5a8a38 376px,#f0f0e8 380px,#f4f4f4 408px,#303030 411px,#c4e8f0 416px,#c8e4f4 448px)"></div>
<svg class="a" style="left:1229px;top:534px" width="17" height="16" viewBox="0 0 17 16"><rect x="0.5" y="0.5" width="15" height="14" fill="#f4f4f0" stroke="#555"/><rect x="1" y="1" width="14" height="3" fill="#10108a"/><path d="M4 6 L12 13 M12 6 L4 13" stroke="#c8c818" stroke-width="2.4"/><path d="M1 15.5h15.500v-13" stroke="#333" fill="none"/></svg>
<div class="a sans" style="left:1250.5px;top:534.0px;width:140.0px;height:16.0px;font-size:12.8px;line-height:16px;color:#111;white-space:pre;text-shadow:0 0 6px #fff,0 0 3px #fff">Results histogram</div>
<div class="a " style="left:1649.5px;top:528.0px;width:47.5px;height:19.0px;border-radius:0 0 5px 5px;border:1px solid rgba(255,190,190,.8);border-top:0;text-align:center;color:#fff;font-family:Liberation Sans,sans-serif;font-weight:bold;font-size:15px;line-height:16px;text-shadow:0 0 2px #333,0 0 1px #000">x</div>
<div class="a " style="left:1228.5px;top:556.0px;width:468.0px;height:460.0px;background:#55cdb0;border:1.5px solid #000"></div>
<div class="a " style="left:1230.0px;top:557.5px;width:465.0px;height:2.0px;background:#8fe6d2"></div>
<div class="a cy" style="left:1233.5px;top:561.5px;width:102.0px;height:287.5px;border:1.5px solid #000"></div>
<div class="a cy" style="left:1233.5px;top:561.5px;width:102.0px;height:137.0px;border:2px solid #000"></div>
<svg class="a" style="left:1239.5px;top:569.2px" width="14" height="14" viewBox="0 0 14 14"><path d="M7 0.800 L13.200 7 L7 13.200 L0.800 7 Z" fill="#d81050"/><path d="M0.800 7 L7 0.800 L13.200 7" fill="none" stroke="#4a8080" stroke-width="1.600"/><path d="M0.800 7 L7 13.200 L13.200 7" fill="none" stroke="#e8fafa" stroke-width="1.600"/></svg>
<div class="a mono" style="left:1258.5px;top:568.7px;width:76.0px;height:18.0px;font-size:15px;line-height:18px;white-space:pre">Count</div>
<svg class="a" style="left:1239.5px;top:596.2px" width="14" height="14" viewBox="0 0 14 14"><path d="M7 0.800 L13.200 7 L7 13.200 L0.800 7 Z" fill="#9ddada"/><path d="M0.800 7 L7 0.800 L13.200 7" fill="none" stroke="#dcf8f8" stroke-width="1.600"/><path d="M0.800 7 L7 13.200 L13.200 7" fill="none" stroke="#4a8080" stroke-width="1.600"/></svg>
<div class="a mono" style="left:1258.5px;top:595.7px;width:76.0px;height:18.0px;font-size:15px;line-height:18px;white-space:pre">Average</div>
<svg class="a" style="left:1239.5px;top:623.2px" width="14" height="14" viewBox="0 0 14 14"><path d="M7 0.800 L13.200 7 L7 13.200 L0.800 7 Z" fill="#9ddada"/><path d="M0.800 7 L7 0.800 L13.200 7" fill="none" stroke="#dcf8f8" stroke-width="1.600"/><path d="M0.800 7 L7 13.200 L13.200 7" fill="none" stroke="#4a8080" stroke-width="1.600"/></svg>
<div class="a mono" style="left:1258.5px;top:622.7px;width:76.0px;height:18.0px;font-size:15px;line-height:18px;white-space:pre">Sum</div>
<svg class="a" style="left:1239.5px;top:650.2px" width="14" height="14" viewBox="0 0 14 14"><path d="M7 0.800 L13.200 7 L7 13.200 L0.800 7 Z" fill="#9ddada"/><path d="M0.800 7 L7 0.800 L13.200 7" fill="none" stroke="#dcf8f8" stroke-width="1.600"/><path d="M0.800 7 L7 13.200 L13.200 7" fill="none" stroke="#4a8080" stroke-width="1.600"/></svg>
<div class="a mono" style="left:1258.5px;top:649.7px;width:76.0px;height:18.0px;font-size:15px;line-height:18px;white-space:pre">Min</div>
<svg class="a" style="left:1239.5px;top:677.2px" width="14" height="14" viewBox="0 0 14 14"><path d="M7 0.800 L13.200 7 L7 13.200 L0.800 7 Z" fill="#9ddada"/><path d="M0.800 7 L7 0.800 L13.200 7" fill="none" stroke="#dcf8f8" stroke-width="1.600"/><path d="M0.800 7 L7 13.200 L13.200 7" fill="none" stroke="#4a8080" stroke-width="1.600"/></svg>
<div class="a mono" style="left:1258.5px;top:676.7px;width:76.0px;height:18.0px;font-size:15px;line-height:18px;white-space:pre">Max</div>
<div class="a cy raised" style="left:1236.0px;top:816.5px;width:30.0px;height:29.5px;"><svg width="26" height="26" viewBox="0 0 26 26" style="position:absolute;left:0;top:0"><rect x="2.5" y="2.5" width="21" height="21" fill="#9ddada" stroke="#000" stroke-width="1"/><text x="13" y="12" text-anchor="middle" font-family="Liberation Serif, serif" font-weight="normal" font-size="12.5" textLength="21" lengthAdjust="spacingAndGlyphs" fill="#000">DEL</text><circle cx="13" cy="18" r="3.300" fill="#f01010" stroke="#400" stroke-width=".6"/></svg></div>
<div class="a cy raised" style="left:1270.0px;top:816.5px;width:30.0px;height:29.5px;"><svg width="26" height="26" viewBox="0 0 26 26" style="position:absolute;left:0;top:0"><rect x="2.5" y="2.5" width="21" height="21" fill="#9ddada" stroke="#000" stroke-width="1"/><text x="13" y="12" text-anchor="middle" font-family="Liberation Serif, serif" font-weight="normal" font-size="12.5" textLength="21" lengthAdjust="spacingAndGlyphs" fill="#000">REF</text><circle cx="13" cy="18" r="3.300" fill="#22e022" stroke="#040" stroke-width=".6"/></svg></div>
<div class="a cy" style="left:1338.0px;top:562.0px;width:352.0px;height:222.0px;border:2px solid #000;border-bottom:0"></div>
<div class="a mono" style="left:1426.0px;top:566.5px;width:178.0px;height:21.0px;background:#b0ffff;border:1px solid #000;box-shadow:1.5px 1.5px 0 #6a8a8a;font-size:14.5px;line-height:22px;text-align:center;white-space:pre;font-style:italic;letter-spacing:-0.1px">Size(Width) / Count</div>
<div class="a mono" style="left:1344.5px;top:711.5px;width:55.2px;height:18.0px;font-size:14.5px;line-height:18px;text-align:center;white-space:pre;letter-spacing:0.6px;color:#000">2</div>
<div class="a mono" style="left:1399.5px;top:711.5px;width:55.2px;height:18.0px;font-size:14.5px;line-height:18px;text-align:center;white-space:pre;letter-spacing:0.6px;color:#000">20</div>
<div class="a " style="left:1454.3px;top:719.0px;width:55.2px;height:8.5px;background:#ff1a1a;border:1px solid #400;border-bottom:0"></div>
<div class="a mono" style="left:1454.3px;top:703.0px;width:55.2px;height:18.0px;font-size:14.5px;line-height:18px;text-align:center;white-space:pre;letter-spacing:0.6px;color:#000">186</div>
<div class="a " style="left:1509.5px;top:710.0px;width:55.2px;height:17.5px;background:#ff1a1a;border:1px solid #400;border-bottom:0"></div>
<div class="a mono" style="left:1509.5px;top:694.0px;width:55.2px;height:18.0px;font-size:14.5px;line-height:18px;text-align:center;white-space:pre;letter-spacing:0.6px;color:#e01818">341</div>
<div class="a " style="left:1564.6px;top:688.5px;width:55.2px;height:39.0px;background:#ff1a1a;border:1px solid #400;border-bottom:0"></div>
<div class="a mono" style="left:1564.6px;top:671.3px;width:55.2px;height:18.0px;font-size:14.5px;line-height:18px;text-align:center;white-space:pre;letter-spacing:0.6px;color:#000">761</div>
<div class="a " style="left:1619.6px;top:604.2px;width:55.2px;height:123.3px;background:#ffff20;border:1px solid #400;border-bottom:0"></div>
<div class="a mono" style="left:1619.6px;top:587.5px;width:55.2px;height:18.0px;font-size:14.5px;line-height:18px;text-align:center;white-space:pre;letter-spacing:0.6px;color:#000">2335</div>
<div class="a " style="left:1340.0px;top:727.0px;width:348.0px;height:4.5px;background:#000"></div>
<div class="a mono" style="left:1344.5px;top:732.5px;width:55.6px;height:28.5px;background:#ff1a1a;border:1px solid #300;overflow:hidden;font-size:14px;line-height:15px;white-space:pre;text-align:center"><div class="a" style="left:0;top:1.5px;width:34px;text-align:right">0-</div><div class="a" style="left:0;top:16px;width:34px;text-align:right">1</div></div>
<div class="a mono" style="left:1399.5px;top:732.5px;width:55.6px;height:28.5px;background:#ff1a1a;border:1px solid #300;overflow:hidden;font-size:14px;line-height:15px;white-space:pre;text-align:center"><div class="a" style="left:0;top:1.5px;width:34px;text-align:right">1-</div><div class="a" style="left:0;top:16px;width:34px;text-align:right">2</div></div>
<div class="a mono" style="left:1454.6px;top:732.5px;width:55.6px;height:28.5px;background:#ff1a1a;border:1px solid #300;overflow:hidden;font-size:14px;line-height:15px;white-space:pre;text-align:center"><div class="a" style="left:0;top:1.5px;width:34px;text-align:right">2-</div><div class="a" style="left:0;top:16px;width:34px;text-align:right">3</div></div>
<div class="a mono" style="left:1509.7px;top:732.5px;width:55.6px;height:28.5px;background:#ff1a1a;border:1px solid #300;overflow:hidden;font-size:14px;line-height:15px;white-space:pre;text-align:center"><div class="a" style="left:0;top:1.5px;width:34px;text-align:right">3-</div><div class="a" style="left:0;top:16px;width:34px;text-align:right">4</div></div>
<div class="a mono" style="left:1564.7px;top:732.5px;width:55.6px;height:28.5px;background:#ff1a1a;border:1px solid #300;overflow:hidden;font-size:14px;line-height:15px;white-space:pre;text-align:center"><div class="a" style="left:0;top:1.5px;width:34px;text-align:right">4-</div><div class="a" style="left:0;top:16px;width:34px;text-align:right">5</div></div>
<div class="a mono" style="left:1619.8px;top:732.5px;width:55.6px;height:28.5px;background:#ffff20;border:1px solid #300;overflow:hidden;font-size:14px;line-height:15px;white-space:pre;text-align:center"><div class="a" style="left:0;top:1.5px;width:34px;text-align:right">5-</div><div class="a" style="left:0;top:16px;width:34px;text-align:right">6</div></div>
<div class="a " style="left:1339.5px;top:769.0px;width:349.0px;height:12.5px;background:#86bebe;border:1.5px solid;border-color:#5a9494 #d0f4f4 #d0f4f4 #5a9494"></div>
<svg class="a" style="left:1341.5px;top:770.5px" width="12" height="10" viewBox="0 0 12 10"><path d="M1 5 L11 1 L11 9 Z" fill="#9ddada" stroke="#d8f8f8" stroke-width="1.3"/><path d="M11 1 L11 9" stroke="#5a9494" stroke-width="1.3"/></svg>
<svg class="a" style="left:1675px;top:770.5px" width="12" height="10" viewBox="0 0 12 10"><path d="M11 5 L1 1 L1 9 Z" fill="#9ddada" stroke="#5a9494" stroke-width="1.3"/><path d="M1 9 L1 1 L11 5" stroke="#d8f8f8" stroke-width="1.3" fill="none"/></svg>
<div class="a cy raised" style="left:1353.5px;top:770.5px;width:249.5px;height:9.5px;border-width:1.5px"></div>
<div class="a cy" style="left:1338.0px;top:783.5px;width:352.0px;height:64.5px;border:2px solid #000;border-bottom-width:3px"></div>
<div class="a cy raised" style="left:1340.5px;top:785.5px;width:58.0px;height:59.5px;border-width:1.5px;border-color:#5a9494 #d0f4f4 #d0f4f4 #5a9494"></div>
<div class="a mono" style="left:1345.0px;top:789.0px;width:45.5px;height:15.0px;background:#000;color:#fff;font-size:15px;line-height:15px;white-space:pre;overflow:hidden">Width</div>
<div class="a " style="left:1399.5px;top:785.0px;width:14.0px;height:59.5px;background:#86bebe;border:1.5px solid;border-color:#5a9494 #d0f4f4 #d0f4f4 #5a9494"></div>
<svg class="a" style="left:1401px;top:787px" width="11" height="12" viewBox="0 0 11 12"><path d="M5.500 1 L10 11 L1 11 Z" fill="#9ddada" stroke="#d8f8f8" stroke-width="1.3"/><path d="M10 11 L1 11" stroke="#5a9494" stroke-width="1.3"/></svg>
<svg class="a" style="left:1401px;top:830.5px" width="11" height="12" viewBox="0 0 11 12"><path d="M5.500 11 L10 1 L1 1 Z" fill="#9ddada" stroke="#5a9494" stroke-width="1.3"/><path d="M1 1 L10 1 M1 1 L5.500 11" stroke="#d8f8f8" stroke-width="1.3"/></svg>
<div class="a cy raised" style="left:1402.0px;top:800.0px;width:9.0px;height:29.0px;border-width:1.5px"></div>
<div class="a " style="left:1414.5px;top:785.5px;width:2.0px;height:60.0px;background:#000"></div>
<div class="a mono" style="left:1417.0px;top:787.0px;width:270.0px;height:18.0px;font-size:15px;line-height:18px;text-align:center;white-space:pre">Resolution</div>
<div class="a mono" style="left:1443.5px;top:809.5px;width:40.0px;height:18.0px;font-size:15px;line-height:18px;white-space:pre">1.0</div>
<div class="a " style="left:1417.0px;top:829.0px;width:268.0px;height:12.5px;background:#86bebe;border:1.5px solid;border-color:#5a9494 #d0f4f4 #d0f4f4 #5a9494"></div>
<div class="a cy raised" style="left:1440.0px;top:830.5px;width:30.0px;height:9.5px;border-width:1.5px"></div>
<div class="a " style="left:1454.5px;top:831.5px;width:1.5px;height:7.5px;background:#5a9494"></div>
<div class="a " style="left:1230.0px;top:852.0px;width:465.0px;height:1.5px;background:#2f8f77"></div>
<div class="a " style="left:1230.0px;top:853.5px;width:465.0px;height:1.5px;background:#a9efdc"></div>
<div class="a teal raisedT" style="left:1674.5px;top:849.0px;width:11.0px;height:9.0px;border-width:1.5px"></div>
<div class="a teal" style="left:1232.5px;top:857.5px;width:458.5px;height:160.0px;border:2px solid #000"></div>
<div class="a " style="left:1234.5px;top:859.5px;width:454.5px;height:2.0px;background:#8fe6d2"></div>
<svg class="a" style="left:1409px;top:879px" width="108" height="123" viewBox="0 0 108 123" shape-rendering="crispEdges"><rect x="0.75" y="0.75" width="106" height="121" fill="#9ddada" stroke="#000" stroke-width="1.5"/><g fill="#ee22ee"><rect x="49" y="14" width="6" height="22"/><rect x="50" y="39" width="6" height="22"/><rect x="50" y="69" width="6" height="22"/><rect x="50" y="92" width="6" height="22"/><rect x="46" y="8" width="3" height="3"/><rect x="41" y="12" width="5" height="2"/><rect x="47" y="63" width="4" height="4"/><rect x="60" y="42" width="3" height="3"/><rect x="70" y="41" width="4" height="3"/><rect x="73" y="46" width="5" height="4"/><rect x="76" y="55" width="3" height="3"/><rect x="80" y="30" width="3" height="3"/><rect x="96" y="46" width="3" height="3"/><rect x="60" y="90" width="4" height="6"/><rect x="66" y="93" width="4" height="3"/><rect x="71" y="95" width="4" height="3"/><rect x="80" y="83" width="3" height="3"/><rect x="93" y="83" width="3" height="4"/><rect x="93" y="93" width="3" height="3"/></g></svg>

</body></html>
